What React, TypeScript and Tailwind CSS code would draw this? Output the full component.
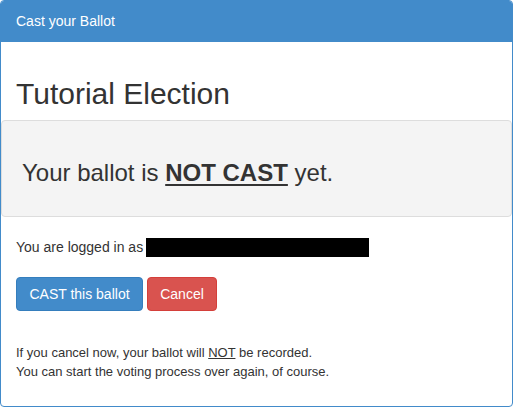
export default function App() {
  return (
    <div className="w-[513px] h-[407px] border border-[#428bca] rounded-[4px] overflow-hidden font-['Liberation_Sans',Arial,sans-serif] text-[#333] bg-white">
      <div className="bg-[#428bca] text-white text-[14px] leading-[20px] px-[15px] pt-[10px] pb-[11px]">
        Cast your Ballot
      </div>
      <h1 className="px-[15px] mt-[32px] mb-[6px] text-[30px] leading-[40px] font-normal">Tutorial Election</h1>
      <div className="border border-[#ddd] rounded-[4px] bg-[#f4f4f4] pt-[34px] pb-[25px] px-[20px]">
        <div className="text-[24px] leading-[36px]">
          Your ballot is <span className="font-bold underline decoration-[2px] underline-offset-[3px]">NOT CAST</span> yet.
        </div>
      </div>
      <div className="px-[15px]">
        <div className="mt-[20px] text-[14px] leading-[20px] flex items-center">
          <span>You are logged in as</span>
          <span className="inline-block ml-[3px] w-[223px] h-[19px] bg-black"></span>
        </div>
        <div className="mt-[20px] flex gap-[4px]">
          <button className="w-[127px] h-[34px] text-[14px] text-white bg-[#428bca] border border-[#357ebd] rounded-[4px]">CAST this ballot</button>
          <button className="w-[70px] h-[34px] text-[14px] text-white bg-[#d9534f] border border-[#d43f3a] rounded-[4px]">Cancel</button>
        </div>
        <div className="mt-[32px] text-[13px] leading-[19px]">
          <div>If you cancel now, your ballot will <span className="underline">NOT</span> be recorded.</div>
          <div>You can start the voting process over again, of course.</div>
        </div>
      </div>
    </div>
  );
}
